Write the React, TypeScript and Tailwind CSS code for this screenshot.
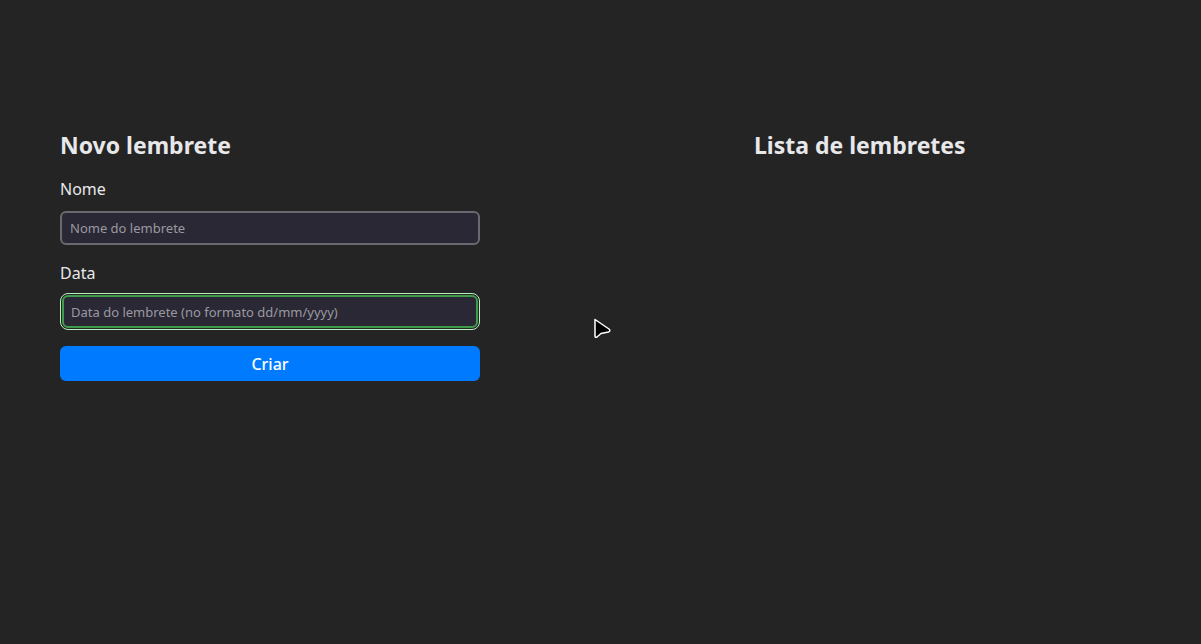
import { useState } from "react";

const font = { fontFamily: '"Noto Sans", "Open Sans", sans-serif' };

const ReminderForm = () => {
  const [nome, setNome] = useState("");
  const [data, setData] = useState("");

  return (
    <div className="w-[420px] flex flex-col">
      <h2 className="text-[23px] leading-8 font-bold text-[#e8e8ea]">Novo lembrete</h2>
      <label className="mt-[16px] text-[16px] leading-6 text-[#e8e8ea]">Nome</label>
      <input
        value={nome}
        onChange={(e) => setNome(e.target.value)}
        placeholder="Nome do lembrete"
        className="mt-[10px] h-[34px] w-full rounded-[6px] border-2 border-[#6a696f] bg-[#2a2834] px-[8px] text-[13px] text-[#e8e8ea] placeholder:text-[#9a99a0] outline-none"
      />
      <label className="mt-[16px] text-[16px] leading-6 text-[#e8e8ea]">Data</label>
      <div className="mt-[8px] rounded-[8px] border border-[#b9f0c0] p-px">
        <input
          value={data}
          onChange={(e) => setData(e.target.value)}
          placeholder="Data do lembrete (no formato dd/mm/yyyy)"
          className="h-[33px] w-full rounded-[6px] border-2 border-[#3f9a4c] bg-[#2a2834] px-[7px] text-[13px] text-[#e8e8ea] placeholder:text-[#9a99a0] outline-none"
        />
      </div>
      <button className="mt-[16px] h-[35px] w-full rounded-[6px] bg-[#007bff] text-[16px] font-medium text-white">
        Criar
      </button>
    </div>
  );
};

export default function App() {
  return (
    <div style={font} className="relative min-h-[644px] w-full bg-[#242424] pt-[129px] pl-[60px]">
      <div className="flex">
        <div className="w-[694px]">
          <ReminderForm />
        </div>
        <div className="flex flex-col">
          <h2 className="text-[23px] leading-8 font-bold text-[#e8e8ea]">Lista de lembretes</h2>
        </div>
      </div>
      <svg
        className="absolute left-[592px] top-[317px]"
        width="20"
        height="24"
        viewBox="0 0 20 24"
      >
        <path
          d="M3 2.5 L3 19 Q3 21 5 20 L9 16.5 L16.5 15 Q19 14 17 12 Z"
          fill="#000"
          stroke="#fff"
          strokeWidth="1.5"
          strokeLinejoin="round"
        />
      </svg>
    </div>
  );
}
